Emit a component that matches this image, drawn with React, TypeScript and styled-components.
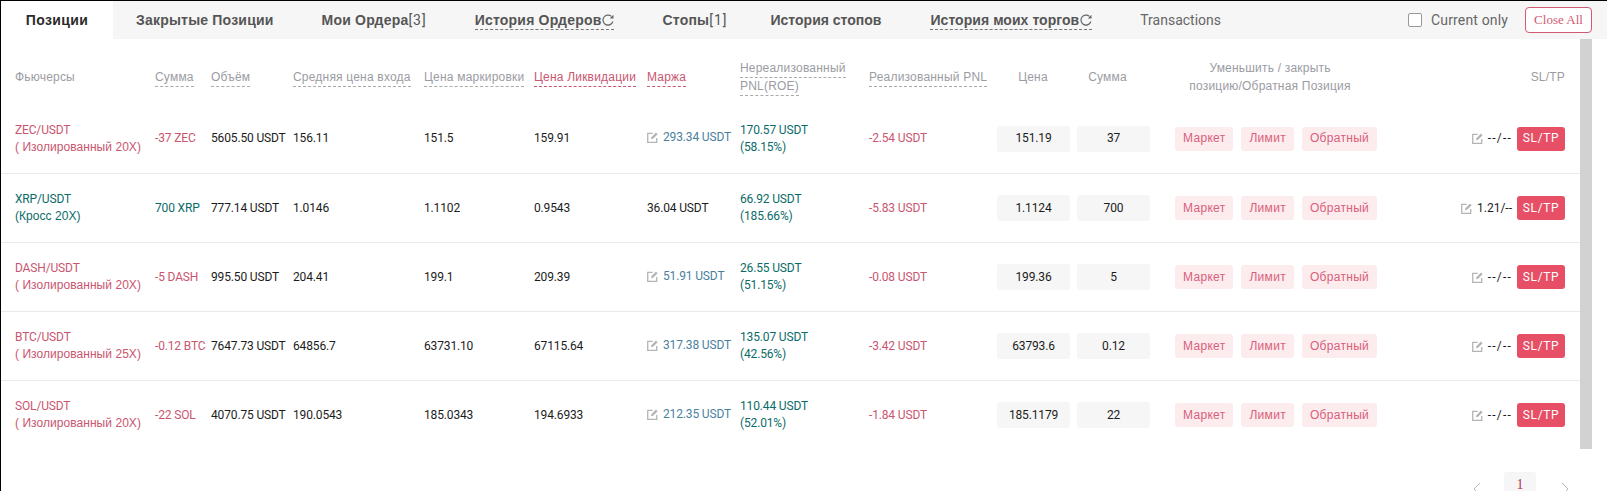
import React from 'react';
import styled, { createGlobalStyle } from 'styled-components';

const GlobalStyle = createGlobalStyle`
  html, body {
    margin: 0;
    padding: 0;
    background: #fff;
    overflow: hidden;
  }
  body {
    font-family: 'Liberation Sans', Arial, sans-serif;
    font-size: 12px;
  }
`;

const NUM_FONT = `Roboto, 'Liberation Sans', sans-serif`;
const RED = '#c9566f';
const GREEN = '#0b6b68';
const BLUE = '#4b7f9f';
const GREY = '#9b9ca3';

const Page = styled.div`
  width: 1607px;
  height: 491px;
  box-sizing: border-box;
  border-top: 1px solid #000;
  border-left: 1px solid #000;
  overflow: hidden;
`;

const TabBar = styled.div`
  display: flex;
  align-items: stretch;
  height: 38px;
  background: #f6f6f6;
  padding-right: 15px;
`;

const Tab = styled.div<{ $active?: boolean; $gap?: number; $spacing?: number }>`
  display: flex;
  align-items: center;
  width: ${(p) => (p.$active ? '112px' : 'auto')};
  justify-content: ${(p) => (p.$active ? 'center' : 'flex-start')};
  margin-right: ${(p) => p.$gap ?? 48}px;
  background: ${(p) => (p.$active ? '#fff' : 'transparent')};
  color: ${(p) => (p.$active ? '#2b2b2b' : '#555')};
  font-size: 14px;
  font-weight: bold;
  letter-spacing: ${(p) => p.$spacing ?? 0.2}px;
  white-space: nowrap;
`;

const TabLabel = styled.span`
  display: inline-flex;
  align-items: center;
  gap: 1px;
  line-height: 18px;
  border-bottom: 1px dashed #777;
`;

const Count = styled.span`
  font-weight: 400;
  font-family: ${NUM_FONT};
  letter-spacing: 1px;
`;

const PlainTab = styled.div`
  display: flex;
  align-items: center;
  color: #666;
  font-family: ${NUM_FONT};
  font-size: 14px;
`;

const TabTools = styled.div`
  margin-left: auto;
  display: flex;
  align-items: center;
`;

const CurrentOnly = styled.label`
  display: flex;
  align-items: center;
  gap: 9px;
  margin-right: 17px;
  color: #666;
  font-family: ${NUM_FONT};
  font-size: 14px;
  letter-spacing: 0.15px;
`;

const CheckBox = styled.span`
  width: 12px;
  height: 12px;
  border: 1px solid #999;
  border-radius: 2px;
  background: #fff;
`;

const CloseAll = styled.button`
  width: 67px;
  height: 26px;
  padding: 0;
  box-sizing: border-box;
  background: #fff;
  border: 1px solid #cf5a72;
  border-radius: 4px;
  color: #cf5a72;
  font-family: 'Liberation Serif', serif;
  font-size: 13px;
`;

const Body = styled.div`
  display: flex;
  height: 410px;
`;

const TableWrap = styled.div`
  width: 1579px;
`;

const ScrollThumb = styled.div`
  width: 12px;
  height: 100%;
  background: #d2d2d2;
`;

const Table = styled.table`
  width: 1579px;
  border-collapse: collapse;
  table-layout: fixed;
`;

const Th = styled.th<{ $center?: boolean; $right?: boolean; $pullLeft?: number }>`
  height: 65px;
  padding: 11px ${(p) => p.$pullLeft ?? 0}px 0 0;
  box-sizing: border-box;
  font-weight: normal;
  font-size: 12px;
  line-height: 18px;
  letter-spacing: 0.2px;
  color: ${GREY};
  text-align: ${(p) => (p.$center ? 'center' : p.$right ? 'right' : 'left')};
  &:first-child {
    padding-left: 14px;
  }
  &:last-child {
    padding-right: 15px;
  }
`;

const Dashed = styled.span<{ $red?: boolean }>`
  color: ${(p) => (p.$red ? RED : GREY)};
  border-bottom: 1px dashed ${(p) => (p.$red ? RED : '#aaa')};
  padding-bottom: 2px;
`;

const Row = styled.tr`
  height: 69px;
  border-top: 1px solid #e9e9e9;
  &:first-child {
    border-top: none;
  }
`;

const Td = styled.td<{ $color?: string }>`
  padding: 1px 0 0;
  box-sizing: border-box;
  font-family: ${NUM_FONT};
  font-size: 12px;
  line-height: 17px;
  letter-spacing: -0.15px;
  white-space: nowrap;
  color: ${(p) => p.$color || '#1c1c1c'};
  &:first-child {
    padding-left: 14px;
  }
`;

const Mode = styled.span`
  font-family: 'Liberation Sans', sans-serif;
  letter-spacing: 0.05px;
`;

const Margin = styled.span`
  display: inline-flex;
  align-items: center;
  gap: 5px;
`;

const PriceBox = styled.div`
  width: 73px;
  height: 26px;
  display: flex;
  align-items: center;
  justify-content: center;
  background: #f6f6f6;
  border-radius: 3px;
  color: #1c1c1c;
`;

const Actions = styled.div`
  display: flex;
  align-items: center;
  gap: 8px;
`;

const SoftButton = styled.span`
  height: 24px;
  padding: 0 8px;
  display: flex;
  align-items: center;
  background: #fcecee;
  border-radius: 3px;
  color: #d9607a;
  font-family: 'Liberation Sans', sans-serif;
  font-size: 12px;
  letter-spacing: 0.3px;
`;

const SlTp = styled.div`
  display: flex;
  align-items: center;
  justify-content: flex-end;
  padding-right: 15px;
  color: #1c1c1c;
`;

const SlTpValue = styled.span<{ $empty: boolean }>`
  margin: 0 5px;
  letter-spacing: ${(p) => (p.$empty ? 1.2 : 0)}px;
`;

const SlTpButton = styled.span`
  width: 48px;
  height: 24px;
  display: flex;
  align-items: center;
  justify-content: center;
  background: #e64f66;
  border-radius: 3px;
  color: #fff;
  letter-spacing: 0.6px;
`;

const Pager = styled.div`
  display: flex;
  align-items: flex-start;
  padding: 23px 0 0 1472px;
`;

const PageNum = styled.div`
  width: 32px;
  height: 32px;
  margin: 0 25px 0 23px;
  display: flex;
  justify-content: center;
  padding-top: 7px;
  box-sizing: border-box;
  background: #f6f6f6;
  border-radius: 3px;
  color: #b8324a;
  font-family: 'Liberation Serif', serif;
  font-size: 14px;
  line-height: 11px;
`;

const Chevron = styled.svg`
  margin-top: 10px;
`;

const EditIcon = () => (
  <svg width="11" height="11" viewBox="0 0 12 12" fill="none" stroke="#b4b4b4" strokeWidth="1.4">
    <path d="M10.6 6.5V11.2H0.8V1.6h5.4" />
    <path d="M4.4 8L4.8 5.6L9.8 0.6L11.6 2.4L6.6 7.4Z" fill="#b4b4b4" stroke="none" />
  </svg>
);

const Refresh = () => (
  <svg width="12" height="12" viewBox="0 0 12 12" fill="none" stroke="#666" strokeWidth="1.2">
    <path d="M10.8 7.5A5 5 0 1 1 9.4 2.4" />
    <path d="M7.8 4.4h3.7V0.8Z" fill="#666" stroke="none" />
  </svg>
);

type Position = {
  pair: string;
  mode: string;
  size: string;
  volume: string;
  entry: string;
  mark: string;
  liq: string;
  margin: string;
  marginEdit: boolean;
  pnl: string;
  roe: string;
  realized: string;
  price: string;
  amount: string;
  sl: string;
  long?: boolean;
};

const positions: Position[] = [
  { pair: 'ZEC/USDT', mode: '( Изолированный 20X)', size: '-37 ZEC', volume: '5605.50 USDT', entry: '156.11', mark: '151.5', liq: '159.91', margin: '293.34 USDT', marginEdit: true, pnl: '170.57 USDT', roe: '(58.15%)', realized: '-2.54 USDT', price: '151.19', amount: '37', sl: '--/--' },
  { pair: 'XRP/USDT', mode: '(Кросс 20X)', size: '700 XRP', volume: '777.14 USDT', entry: '1.0146', mark: '1.1102', liq: '0.9543', margin: '36.04 USDT', marginEdit: false, pnl: '66.92 USDT', roe: '(185.66%)', realized: '-5.83 USDT', price: '1.1124', amount: '700', sl: '1.21/--', long: true },
  { pair: 'DASH/USDT', mode: '( Изолированный 20X)', size: '-5 DASH', volume: '995.50 USDT', entry: '204.41', mark: '199.1', liq: '209.39', margin: '51.91 USDT', marginEdit: true, pnl: '26.55 USDT', roe: '(51.15%)', realized: '-0.08 USDT', price: '199.36', amount: '5', sl: '--/--' },
  { pair: 'BTC/USDT', mode: '( Изолированный 25X)', size: '-0.12 BTC', volume: '7647.73 USDT', entry: '64856.7', mark: '63731.10', liq: '67115.64', margin: '317.38 USDT', marginEdit: true, pnl: '135.07 USDT', roe: '(42.56%)', realized: '-3.42 USDT', price: '63793.6', amount: '0.12', sl: '--/--' },
  { pair: 'SOL/USDT', mode: '( Изолированный 20X)', size: '-22 SOL', volume: '4070.75 USDT', entry: '190.0543', mark: '185.0343', liq: '194.6933', margin: '212.35 USDT', marginEdit: true, pnl: '110.44 USDT', roe: '(52.01%)', realized: '-1.84 USDT', price: '185.1179', amount: '22', sl: '--/--' },
];

const columnWidths = [154, 56, 82, 131, 110, 113, 93, 129, 128, 80, 98, 200, 205];

const App: React.FC = () => (
  <Page>
    <GlobalStyle />
    <TabBar>
      <Tab $active $gap={23} $spacing={0.4}>Позиции</Tab>
      <Tab>Закрытые Позиции</Tab>
      <Tab>Мои Ордера<Count>[3]</Count></Tab>
      <Tab><TabLabel>История Ордеров<Refresh /></TabLabel></Tab>
      <Tab $gap={43}>Стопы<Count>[1]</Count></Tab>
      <Tab $gap={49} $spacing={0}>История стопов</Tab>
      <Tab $spacing={0.05}><TabLabel>История моих торгов<Refresh /></TabLabel></Tab>
      <PlainTab>Transactions</PlainTab>
      <TabTools>
        <CurrentOnly><CheckBox />Current only</CurrentOnly>
        <CloseAll>Close All</CloseAll>
      </TabTools>
    </TabBar>
    <Body>
      <TableWrap>
        <Table>
          <colgroup>
            {columnWidths.map((w, i) => (
              <col key={i} style={{ width: w }} />
            ))}
          </colgroup>
          <thead>
            <tr>
              <Th>Фьючерсы</Th>
              <Th><Dashed>Сумма</Dashed></Th>
              <Th><Dashed>Объём</Dashed></Th>
              <Th><Dashed>Средняя цена входа</Dashed></Th>
              <Th><Dashed>Цена маркировки</Dashed></Th>
              <Th><Dashed $red>Цена Ликвидации</Dashed></Th>
              <Th><Dashed $red>Маржа</Dashed></Th>
              <Th><Dashed>Нереализованный PNL(ROE)</Dashed></Th>
              <Th><Dashed>Реализованный PNL</Dashed></Th>
              <Th $center $pullLeft={8}>Цена</Th>
              <Th $center $pullLeft={37}>Сумма</Th>
              <Th $center $pullLeft={10}>Уменьшить / закрыть<br />позицию/Обратная Позиция</Th>
              <Th $right>SL/TP</Th>
            </tr>
          </thead>
          <tbody>
            {positions.map((p) => {
              const side = p.long ? GREEN : RED;
              return (
                <Row key={p.pair}>
                  <Td $color={side}>{p.pair}<br /><Mode>{p.mode}</Mode></Td>
                  <Td $color={side}>{p.size}</Td>
                  <Td>{p.volume}</Td>
                  <Td>{p.entry}</Td>
                  <Td>{p.mark}</Td>
                  <Td>{p.liq}</Td>
                  <Td $color={p.marginEdit ? BLUE : undefined}>
                    <Margin>{p.marginEdit && <EditIcon />}{p.margin}</Margin>
                  </Td>
                  <Td $color={GREEN}>{p.pnl}<br />{p.roe}</Td>
                  <Td $color={RED}>{p.realized}</Td>
                  <Td><PriceBox>{p.price}</PriceBox></Td>
                  <Td><PriceBox>{p.amount}</PriceBox></Td>
                  <Td>
                    <Actions>
                      <SoftButton>Маркет</SoftButton>
                      <SoftButton>Лимит</SoftButton>
                      <SoftButton>Обратный</SoftButton>
                    </Actions>
                  </Td>
                  <Td>
                    <SlTp>
                      <EditIcon />
                      <SlTpValue $empty={p.sl === '--/--'}>{p.sl}</SlTpValue>
                      <SlTpButton>SL/TP</SlTpButton>
                    </SlTp>
                  </Td>
                </Row>
              );
            })}
          </tbody>
        </Table>
      </TableWrap>
      <ScrollThumb />
    </Body>
    <Pager>
      <Chevron width="8" height="14" viewBox="0 0 8 14" fill="none" stroke="#b5b5b5"><path d="M7 1L1 7l6 6" /></Chevron>
      <PageNum>1</PageNum>
      <Chevron width="8" height="14" viewBox="0 0 8 14" fill="none" stroke="#b5b5b5"><path d="M1 1l6 6-6 6" /></Chevron>
    </Pager>
  </Page>
);

export default App;
